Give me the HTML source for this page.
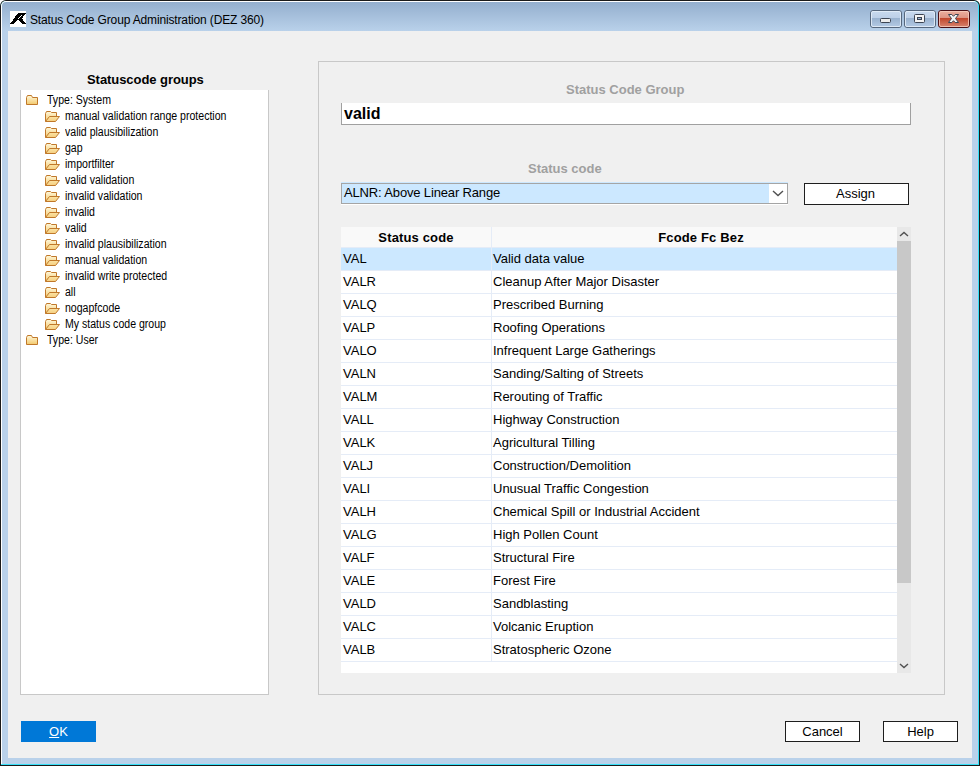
<!DOCTYPE html>
<html><head><meta charset="utf-8">
<style>
*{box-sizing:border-box;margin:0;padding:0}
html,body{width:980px;height:766px;overflow:hidden;background:#fff}
body{position:relative;font-family:"Liberation Sans",sans-serif;color:#000}
.a{position:absolute}
#win{left:0;top:0;width:980px;height:766px;background:#1a1a1a;border-radius:6px 6px 0 0}
#hl{left:1px;top:1px;width:978px;height:764px;border-radius:5px 5px 0 0;background:#36e0f8;}
#hl2{left:1px;top:1px;width:977px;height:763px;border-radius:5px 5px 0 0;background:#fff;}
#frame{left:2px;top:2px;width:976px;height:762px;border-radius:4px 4px 0 0;background:linear-gradient(#94afce 0px,#b9d1ea 29px,#b9d1ea 100%)}
#client{left:8px;top:31px;width:964px;height:727px;background:#f0f0f0}
#title{left:30px;top:12px;font-size:12px;line-height:16px;color:#000;white-space:nowrap;letter-spacing:-0.15px}
.tb{top:10px;height:18px;border:1px solid #56697f;border-radius:3px;background:linear-gradient(#c7d8ec 0,#bcd0e8 50%,#98b4d4 50%,#b4cae4 100%)}
.t{white-space:nowrap;line-height:16px}
.tree{font-size:12px;transform:scaleX(0.88);transform-origin:0 0}
.lbl{font-weight:bold;font-size:13px;color:#a0a0a0;white-space:nowrap}
.row{position:absolute;left:0;width:556px;height:23px;border-bottom:1px solid #e5ecf7;font-size:13px;line-height:22px}
.row span{position:absolute;top:0}
.btn{border:1px solid #1e1e1e;background:#fff;font-size:13px;text-align:center;line-height:19px}
</style></head><body>
<div id="win" class="a"></div>
<div id="hl" class="a"></div>
<div id="hl2" class="a"></div>
<div id="frame" class="a"></div>
<div id="client" class="a"></div>
<svg width="0" height="0" style="position:absolute"><defs><linearGradient id="fg" x1="0" y1="0" x2="0" y2="1"><stop offset="0" stop-color="#fff8dc"/><stop offset="1" stop-color="#f3c96c"/></linearGradient><linearGradient id="fg2" x1="0" y1="0" x2="0" y2="1"><stop offset="0" stop-color="#fbe3a4"/><stop offset="1" stop-color="#f5cf80"/></linearGradient></defs></svg>
<div class="a" style="left:10px;top:11px;width:16px;height:16px;background:#fff"></div>
<svg class="a" style="left:10px;top:11px" width="16" height="16" viewBox="0 0 16 16" shape-rendering="crispEdges"><path d="M0 13 L8 2 L16 2 L12 7.5 L16 13 L12.3 13 L8.2 8.5 L4 13 Z" fill="#000"/><rect x="8" y="7" width="1" height="1" fill="#fff"/><rect x="9" y="6" width="1" height="1" fill="#fff"/><rect x="10" y="5" width="1" height="1" fill="#fff"/><rect x="11" y="4" width="1" height="1" fill="#fff"/></svg>
<div id="title" class="a">Status Code Group Administration (DEZ 360)</div>
<svg class="a" style="left:860px;top:0px" width="120" height="31" viewBox="0 0 120 31">
<defs>
<linearGradient id="gb" x1="0" y1="10" x2="0" y2="28" gradientUnits="userSpaceOnUse"><stop offset="0" stop-color="#cadbef"/><stop offset="0.42" stop-color="#bdd0e8"/><stop offset="0.42" stop-color="#97b0cd"/><stop offset="1" stop-color="#b7cde7"/></linearGradient>
<linearGradient id="gr" x1="0" y1="10" x2="0" y2="28" gradientUnits="userSpaceOnUse"><stop offset="0" stop-color="#eeb3a3"/><stop offset="0.42" stop-color="#de9584"/><stop offset="0.42" stop-color="#bf4126"/><stop offset="1" stop-color="#d98a76"/></linearGradient>
</defs>
<rect x="10.5" y="10.5" width="31" height="17" rx="2.5" fill="url(#gb)" stroke="#56677d"/>
<rect x="11.5" y="11.5" width="29" height="15" rx="1.5" fill="none" stroke="#e4edf8" stroke-opacity="0.85"/>
<rect x="20.5" y="18.5" width="10" height="4" rx="1" fill="#ececec" stroke="#3c4452"/>
<rect x="44.5" y="10.5" width="31" height="17" rx="2.5" fill="url(#gb)" stroke="#56677d"/>
<rect x="45.5" y="11.5" width="29" height="15" rx="1.5" fill="none" stroke="#e4edf8" stroke-opacity="0.85"/>
<rect x="54.5" y="14.5" width="10" height="8" rx="1" fill="#f4f4f4" stroke="#3c4452"/>
<rect x="57.5" y="17.5" width="4" height="2" fill="#9cb6d6" stroke="#3c4452"/>
<rect x="78.5" y="10.5" width="31" height="17" rx="2.5" fill="url(#gr)" stroke="#4a1016"/>
<rect x="79.5" y="11.5" width="29" height="15" rx="1.5" fill="none" stroke="#f6cdbf" stroke-opacity="0.8"/>
<path d="M88.5 14.5 L91.8 14.5 L93.5 16.3 L95.2 14.5 L98.5 14.5 L95.5 18.5 L98.5 22.5 L95.2 22.5 L93.5 20.7 L91.8 22.5 L88.5 22.5 L91.5 18.5 Z" fill="#f4f4f4" stroke="#3c4452" stroke-width="1" stroke-linejoin="round"/>
</svg>
<div class="a lbl" style="left:87px;top:72px;color:#000;line-height:16px;letter-spacing:-0.06px">Statuscode groups</div>
<div class="a" style="left:20px;top:90px;width:249px;height:605px;background:#fff;border:1px solid #c8c8c8;border-top:0"></div>
<svg class="a" style="left:26px;top:95px" width="13" height="11" viewBox="0 0 13 11"><path d="M0.5 9.5 L0.5 2.5 L1.5 0.5 L5.5 0.5 L6.5 2.5 L11.5 2.5 L11.5 9.5 Z" fill="url(#fg)" stroke="#c0782a" stroke-width="1" stroke-linejoin="round"/></svg>
<div class="a t tree" style="left:47px;top:92px">Type: System</div>
<svg class="a" style="left:45px;top:111px" width="16" height="12" viewBox="0 0 16 12"><path d="M0.5 10.5 L0.5 2.5 L1.5 0.5 L5.5 0.5 L6.5 1.5 L11.5 1.5 L11.5 5.5" fill="url(#fg)" stroke="#c0782a" stroke-width="1" stroke-linejoin="round"/><path d="M0.5 10.5 L4.5 5.5 L14.5 5.5 L10.5 10.5 Z" fill="url(#fg2)" stroke="#c0782a" stroke-width="1" stroke-linejoin="round"/></svg>
<div class="a t tree" style="left:65px;top:108px">manual validation range protection</div>
<svg class="a" style="left:45px;top:127px" width="16" height="12" viewBox="0 0 16 12"><path d="M0.5 10.5 L0.5 2.5 L1.5 0.5 L5.5 0.5 L6.5 1.5 L11.5 1.5 L11.5 5.5" fill="url(#fg)" stroke="#c0782a" stroke-width="1" stroke-linejoin="round"/><path d="M0.5 10.5 L4.5 5.5 L14.5 5.5 L10.5 10.5 Z" fill="url(#fg2)" stroke="#c0782a" stroke-width="1" stroke-linejoin="round"/></svg>
<div class="a t tree" style="left:65px;top:124px">valid plausibilization</div>
<svg class="a" style="left:45px;top:143px" width="16" height="12" viewBox="0 0 16 12"><path d="M0.5 10.5 L0.5 2.5 L1.5 0.5 L5.5 0.5 L6.5 1.5 L11.5 1.5 L11.5 5.5" fill="url(#fg)" stroke="#c0782a" stroke-width="1" stroke-linejoin="round"/><path d="M0.5 10.5 L4.5 5.5 L14.5 5.5 L10.5 10.5 Z" fill="url(#fg2)" stroke="#c0782a" stroke-width="1" stroke-linejoin="round"/></svg>
<div class="a t tree" style="left:65px;top:140px">gap</div>
<svg class="a" style="left:45px;top:159px" width="16" height="12" viewBox="0 0 16 12"><path d="M0.5 10.5 L0.5 2.5 L1.5 0.5 L5.5 0.5 L6.5 1.5 L11.5 1.5 L11.5 5.5" fill="url(#fg)" stroke="#c0782a" stroke-width="1" stroke-linejoin="round"/><path d="M0.5 10.5 L4.5 5.5 L14.5 5.5 L10.5 10.5 Z" fill="url(#fg2)" stroke="#c0782a" stroke-width="1" stroke-linejoin="round"/></svg>
<div class="a t tree" style="left:65px;top:156px">importfilter</div>
<svg class="a" style="left:45px;top:175px" width="16" height="12" viewBox="0 0 16 12"><path d="M0.5 10.5 L0.5 2.5 L1.5 0.5 L5.5 0.5 L6.5 1.5 L11.5 1.5 L11.5 5.5" fill="url(#fg)" stroke="#c0782a" stroke-width="1" stroke-linejoin="round"/><path d="M0.5 10.5 L4.5 5.5 L14.5 5.5 L10.5 10.5 Z" fill="url(#fg2)" stroke="#c0782a" stroke-width="1" stroke-linejoin="round"/></svg>
<div class="a t tree" style="left:65px;top:172px">valid validation</div>
<svg class="a" style="left:45px;top:191px" width="16" height="12" viewBox="0 0 16 12"><path d="M0.5 10.5 L0.5 2.5 L1.5 0.5 L5.5 0.5 L6.5 1.5 L11.5 1.5 L11.5 5.5" fill="url(#fg)" stroke="#c0782a" stroke-width="1" stroke-linejoin="round"/><path d="M0.5 10.5 L4.5 5.5 L14.5 5.5 L10.5 10.5 Z" fill="url(#fg2)" stroke="#c0782a" stroke-width="1" stroke-linejoin="round"/></svg>
<div class="a t tree" style="left:65px;top:188px">invalid validation</div>
<svg class="a" style="left:45px;top:207px" width="16" height="12" viewBox="0 0 16 12"><path d="M0.5 10.5 L0.5 2.5 L1.5 0.5 L5.5 0.5 L6.5 1.5 L11.5 1.5 L11.5 5.5" fill="url(#fg)" stroke="#c0782a" stroke-width="1" stroke-linejoin="round"/><path d="M0.5 10.5 L4.5 5.5 L14.5 5.5 L10.5 10.5 Z" fill="url(#fg2)" stroke="#c0782a" stroke-width="1" stroke-linejoin="round"/></svg>
<div class="a t tree" style="left:65px;top:204px">invalid</div>
<svg class="a" style="left:45px;top:223px" width="16" height="12" viewBox="0 0 16 12"><path d="M0.5 10.5 L0.5 2.5 L1.5 0.5 L5.5 0.5 L6.5 1.5 L11.5 1.5 L11.5 5.5" fill="url(#fg)" stroke="#c0782a" stroke-width="1" stroke-linejoin="round"/><path d="M0.5 10.5 L4.5 5.5 L14.5 5.5 L10.5 10.5 Z" fill="url(#fg2)" stroke="#c0782a" stroke-width="1" stroke-linejoin="round"/></svg>
<div class="a t tree" style="left:65px;top:220px">valid</div>
<svg class="a" style="left:45px;top:239px" width="16" height="12" viewBox="0 0 16 12"><path d="M0.5 10.5 L0.5 2.5 L1.5 0.5 L5.5 0.5 L6.5 1.5 L11.5 1.5 L11.5 5.5" fill="url(#fg)" stroke="#c0782a" stroke-width="1" stroke-linejoin="round"/><path d="M0.5 10.5 L4.5 5.5 L14.5 5.5 L10.5 10.5 Z" fill="url(#fg2)" stroke="#c0782a" stroke-width="1" stroke-linejoin="round"/></svg>
<div class="a t tree" style="left:65px;top:236px">invalid plausibilization</div>
<svg class="a" style="left:45px;top:255px" width="16" height="12" viewBox="0 0 16 12"><path d="M0.5 10.5 L0.5 2.5 L1.5 0.5 L5.5 0.5 L6.5 1.5 L11.5 1.5 L11.5 5.5" fill="url(#fg)" stroke="#c0782a" stroke-width="1" stroke-linejoin="round"/><path d="M0.5 10.5 L4.5 5.5 L14.5 5.5 L10.5 10.5 Z" fill="url(#fg2)" stroke="#c0782a" stroke-width="1" stroke-linejoin="round"/></svg>
<div class="a t tree" style="left:65px;top:252px">manual validation</div>
<svg class="a" style="left:45px;top:271px" width="16" height="12" viewBox="0 0 16 12"><path d="M0.5 10.5 L0.5 2.5 L1.5 0.5 L5.5 0.5 L6.5 1.5 L11.5 1.5 L11.5 5.5" fill="url(#fg)" stroke="#c0782a" stroke-width="1" stroke-linejoin="round"/><path d="M0.5 10.5 L4.5 5.5 L14.5 5.5 L10.5 10.5 Z" fill="url(#fg2)" stroke="#c0782a" stroke-width="1" stroke-linejoin="round"/></svg>
<div class="a t tree" style="left:65px;top:268px">invalid write protected</div>
<svg class="a" style="left:45px;top:287px" width="16" height="12" viewBox="0 0 16 12"><path d="M0.5 10.5 L0.5 2.5 L1.5 0.5 L5.5 0.5 L6.5 1.5 L11.5 1.5 L11.5 5.5" fill="url(#fg)" stroke="#c0782a" stroke-width="1" stroke-linejoin="round"/><path d="M0.5 10.5 L4.5 5.5 L14.5 5.5 L10.5 10.5 Z" fill="url(#fg2)" stroke="#c0782a" stroke-width="1" stroke-linejoin="round"/></svg>
<div class="a t tree" style="left:65px;top:284px">all</div>
<svg class="a" style="left:45px;top:303px" width="16" height="12" viewBox="0 0 16 12"><path d="M0.5 10.5 L0.5 2.5 L1.5 0.5 L5.5 0.5 L6.5 1.5 L11.5 1.5 L11.5 5.5" fill="url(#fg)" stroke="#c0782a" stroke-width="1" stroke-linejoin="round"/><path d="M0.5 10.5 L4.5 5.5 L14.5 5.5 L10.5 10.5 Z" fill="url(#fg2)" stroke="#c0782a" stroke-width="1" stroke-linejoin="round"/></svg>
<div class="a t tree" style="left:65px;top:300px">nogapfcode</div>
<svg class="a" style="left:45px;top:319px" width="16" height="12" viewBox="0 0 16 12"><path d="M0.5 10.5 L0.5 2.5 L1.5 0.5 L5.5 0.5 L6.5 1.5 L11.5 1.5 L11.5 5.5" fill="url(#fg)" stroke="#c0782a" stroke-width="1" stroke-linejoin="round"/><path d="M0.5 10.5 L4.5 5.5 L14.5 5.5 L10.5 10.5 Z" fill="url(#fg2)" stroke="#c0782a" stroke-width="1" stroke-linejoin="round"/></svg>
<div class="a t tree" style="left:65px;top:316px">My status code group</div>
<svg class="a" style="left:26px;top:335px" width="13" height="11" viewBox="0 0 13 11"><path d="M0.5 9.5 L0.5 2.5 L1.5 0.5 L5.5 0.5 L6.5 2.5 L11.5 2.5 L11.5 9.5 Z" fill="url(#fg)" stroke="#c0782a" stroke-width="1" stroke-linejoin="round"/></svg>
<div class="a t tree" style="left:47px;top:332px">Type: User</div>
<div class="a" style="left:318px;top:61px;width:627px;height:634px;border:1px solid #c8c8c8"></div>
<div class="a lbl" style="left:566px;top:82px;line-height:16px">Status Code Group</div>
<div class="a" style="left:341px;top:103px;width:570px;height:22px;background:#fff;border:1px solid #a0a0a0;border-top:0"></div>
<div class="a t" style="left:344px;top:105px;font-weight:bold;font-size:16px;line-height:18px">valid</div>
<div class="a lbl" style="left:528px;top:161px;line-height:16px">Status code</div>
<div class="a" style="left:341px;top:182px;width:447px;height:22px;background:#cce8ff"></div>
<div class="a" style="left:341px;top:183px;width:447px;height:21px;border:1px solid #a5a5a5;background:#cce8ff"></div>
<div class="a" style="left:341px;top:204px;width:447px;height:1px;background:#fff"></div>
<div class="a" style="left:769px;top:184px;width:18px;height:19px;background:#fff"></div>
<svg class="a" style="left:772px;top:190px" width="12" height="7" viewBox="0 0 12 7"><path d="M1 1 L6 5.5 L11 1" fill="none" stroke="#505050" stroke-width="1.4"/></svg>
<div class="a t" style="left:344px;top:185px;font-size:13px;letter-spacing:-0.15px">ALNR: Above Linear Range</div>
<div class="a btn" style="left:804px;top:183px;width:105px;height:22px;line-height:20px;padding-right:2px">Assign</div>
<div class="a" style="left:341px;top:227px;width:570px;height:446px;background:#fff;overflow:hidden">
<div class="a" style="left:0;top:0;width:556px;height:21px;background:#f9f9f9;border-bottom:1px solid #e5ecf7"></div>
<div class="a t" style="left:0;top:3px;width:150px;text-align:center;font-weight:bold;font-size:13px;letter-spacing:0.15px">Status code</div>
<div class="a t" style="left:150px;top:3px;width:420px;text-align:center;font-weight:bold;font-size:13px;letter-spacing:0.15px">Fcode Fc Bez</div>
<div class="row" style="top:21px;background:#cce8ff"><span style="left:2px">VAL</span><span style="left:152px">Valid data value</span></div>
<div class="row" style="top:44px;background:#fff"><span style="left:2px">VALR</span><span style="left:152px">Cleanup After Major Disaster</span></div>
<div class="row" style="top:67px;background:#fff"><span style="left:2px">VALQ</span><span style="left:152px">Prescribed Burning</span></div>
<div class="row" style="top:90px;background:#fff"><span style="left:2px">VALP</span><span style="left:152px">Roofing Operations</span></div>
<div class="row" style="top:113px;background:#fff"><span style="left:2px">VALO</span><span style="left:152px">Infrequent Large Gatherings</span></div>
<div class="row" style="top:136px;background:#fff"><span style="left:2px">VALN</span><span style="left:152px">Sanding/Salting of Streets</span></div>
<div class="row" style="top:159px;background:#fff"><span style="left:2px">VALM</span><span style="left:152px">Rerouting of Traffic</span></div>
<div class="row" style="top:182px;background:#fff"><span style="left:2px">VALL</span><span style="left:152px">Highway Construction</span></div>
<div class="row" style="top:205px;background:#fff"><span style="left:2px">VALK</span><span style="left:152px">Agricultural Tilling</span></div>
<div class="row" style="top:228px;background:#fff"><span style="left:2px">VALJ</span><span style="left:152px">Construction/Demolition</span></div>
<div class="row" style="top:251px;background:#fff"><span style="left:2px">VALI</span><span style="left:152px">Unusual Traffic Congestion</span></div>
<div class="row" style="top:274px;background:#fff"><span style="left:2px">VALH</span><span style="left:152px">Chemical Spill or Industrial Accident</span></div>
<div class="row" style="top:297px;background:#fff"><span style="left:2px">VALG</span><span style="left:152px">High Pollen Count</span></div>
<div class="row" style="top:320px;background:#fff"><span style="left:2px">VALF</span><span style="left:152px">Structural Fire</span></div>
<div class="row" style="top:343px;background:#fff"><span style="left:2px">VALE</span><span style="left:152px">Forest Fire</span></div>
<div class="row" style="top:366px;background:#fff"><span style="left:2px">VALD</span><span style="left:152px">Sandblasting</span></div>
<div class="row" style="top:389px;background:#fff"><span style="left:2px">VALC</span><span style="left:152px">Volcanic Eruption</span></div>
<div class="row" style="top:412px;background:#fff"><span style="left:2px">VALB</span><span style="left:152px">Stratospheric Ozone</span></div>
<div class="row" style="top:435px;background:#fff"><span style="left:2px"></span><span style="left:152px"></span></div>
<div class="a" style="left:150px;top:0;width:1px;height:435px;background:#e5ecf7"></div>
<div class="a" style="left:556px;top:0;width:14px;height:446px;background:#e8e8e8"></div>
<div class="a" style="left:556px;top:14px;width:14px;height:342px;background:#c8c8c8"></div>
<svg class="a" style="left:558px;top:4px" width="10" height="6" viewBox="0 0 10 6"><path d="M1 5 L5 1.5 L9 5" fill="none" stroke="#505050" stroke-width="1.4"/></svg>
<svg class="a" style="left:558px;top:436px" width="10" height="6" viewBox="0 0 10 6"><path d="M1 1 L5 4.5 L9 1" fill="none" stroke="#505050" stroke-width="1.4"/></svg>
</div>
<div class="a" style="left:21px;top:721px;width:75px;height:21px;background:#0078d7;color:#fff;font-size:13px;text-align:center;line-height:21px"><u>O</u>K</div>
<div class="a btn" style="left:785px;top:721px;width:75px;height:21px">Cancel</div>
<div class="a btn" style="left:883px;top:721px;width:75px;height:21px">Help</div>
</body></html>
